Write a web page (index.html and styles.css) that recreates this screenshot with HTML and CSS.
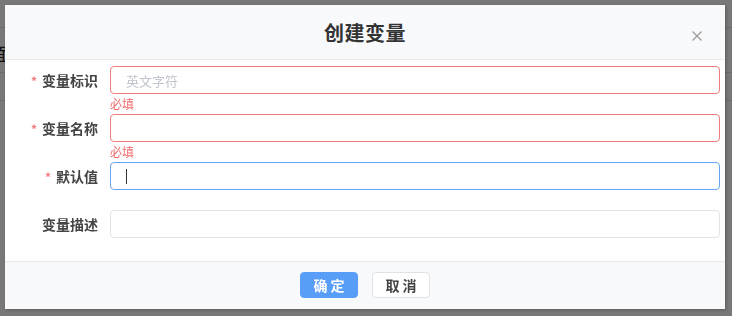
FILE: index.html
```
<!DOCTYPE html>
<html lang="zh-CN">
<head>
    <meta charset="UTF-8">
    <meta name="viewport" content="width=device-width, initial-scale=1.0">
    <title>创建变量</title>
    <link rel="stylesheet" href="styles.css">
</head>
<body>
    <div class="page">
        <div class="page-row"></div>
        <div class="page-row row-tall"><span class="page-glyph">面</span></div>
        <div class="page-row"></div>
    </div>

    <div class="mask">
        <div class="dialog">
            <div class="dialog-header">
                <span class="dialog-title">创建变量</span>
                <span class="dialog-close">
                    <svg width="10" height="10" viewBox="0 0 10 10">
                        <path d="M0.5 0.5 L9.5 9.5 M9.5 0.5 L0.5 9.5" stroke="#9a9a9a" stroke-width="1.2" fill="none"/>
                    </svg>
                </span>
            </div>

            <form class="dialog-body">
                <div class="form-item">
                    <label class="form-label"><span class="req">*</span>变量标识</label>
                    <div class="form-control">
                        <div class="input is-error"><span class="placeholder">英文字符</span></div>
                        <div class="form-error">必填</div>
                    </div>
                </div>
                <div class="form-item">
                    <label class="form-label"><span class="req">*</span>变量名称</label>
                    <div class="form-control">
                        <div class="input is-error"></div>
                        <div class="form-error">必填</div>
                    </div>
                </div>
                <div class="form-item">
                    <label class="form-label"><span class="req">*</span>默认值</label>
                    <div class="form-control">
                        <div class="input is-focus"><span class="caret"></span></div>
                    </div>
                </div>
                <div class="form-item last">
                    <label class="form-label">变量描述</label>
                    <div class="form-control">
                        <div class="input"></div>
                    </div>
                </div>
            </form>

            <div class="dialog-footer">
                <button class="btn btn-primary" type="button">确 定</button>
                <button class="btn" type="button">取 消</button>
            </div>
        </div>
    </div>
</body>
</html>
```

FILE: styles.css
```
body {
    margin: 0;
    padding: 0;
    font-family: "Noto Sans CJK SC", "Noto Sans", sans-serif;
    background: #fff;
}

/* the page behind the mask */
.page {
    height: 316px;
    overflow: hidden;
}

.page-row {
    height: 27px;
    border-bottom: 1px solid #e4e4e4;
}

.row-tall {
    height: 44px;
    position: relative;
}

.page-glyph {
    position: absolute;
    left: -8px;
    top: 12px;
    font-size: 18px;
    color: #222;
}

.mask {
    position: fixed;
    top: 0;
    left: 0;
    width: 100%;
    height: 100%;
    background: rgba(0, 0, 0, 0.53);
}

.dialog {
    position: absolute;
    top: 5px;
    left: 5px;
    width: 720px;
    height: 304px;
    background: #fff;
    box-shadow: 1px 1px 3px rgba(0, 0, 0, 0.25);
    display: flex;
    flex-direction: column;
}

.dialog-header {
    height: 54px;
    background: #f8f9fb;
    border-bottom: 1px solid #e9eaec;
    display: flex;
    align-items: center;
    justify-content: center;
    position: relative;
}

.dialog-title {
    font-size: 20px;
    font-weight: 700;
    color: #333;
    letter-spacing: 0.5px;
    margin-top: 1px;
}

.dialog-close {
    position: absolute;
    top: 26px;
    right: 23px;
    width: 10px;
    height: 10px;
    display: flex;
}

.dialog-body {
    margin: 0;
    padding: 6px 5px 23px 0;
    border-bottom: 1px solid #e9eaec;
    display: flex;
    flex-direction: column;
    gap: 20px;
}

.form-item {
    display: flex;
    height: 28px;
}

.form-label {
    width: 105px;
    box-sizing: border-box;
    padding-right: 12px;
    text-align: right;
    font-size: 14px;
    font-weight: 700;
    color: #444;
    line-height: 28px;
}

.req {
    color: #f47a7a;
    font-size: 12px;
    margin-right: 5px;
    font-weight: 700;
}

.form-control {
    flex: 1;
    position: relative;
}

.input {
    height: 28px;
    box-sizing: border-box;
    border: 1px solid #e1e2e6;
    border-radius: 4px;
    padding-left: 15px;
    display: flex;
    align-items: center;
}

.input.is-error {
    border-color: #f07d7d;
}

.input.is-focus {
    border-color: #69a5f5;
}

.placeholder {
    font-size: 13px;
    color: #c0c4cc;
}

.caret {
    width: 1px;
    height: 15px;
    background: #333;
}

.form-error {
    position: absolute;
    top: 31px;
    left: 0;
    font-size: 12px;
    line-height: 14px;
    color: #f06868;
}

.dialog-footer {
    flex: 1;
    background: #f8f9fb;
    display: flex;
    align-items: center;
    justify-content: center;
    gap: 14px;
    padding-bottom: 1px;
}

.btn {
    width: 58px;
    height: 26px;
    border: 1px solid #e1e2e6;
    border-radius: 4px;
    background: #fff;
    color: #444;
    font-family: "Noto Sans CJK SC", sans-serif;
    font-size: 14px;
    font-weight: 700;
    padding: 0;
    cursor: pointer;
}

.btn-primary {
    background: #589ef8;
    border-color: #589ef8;
    color: #fff;
}
```
